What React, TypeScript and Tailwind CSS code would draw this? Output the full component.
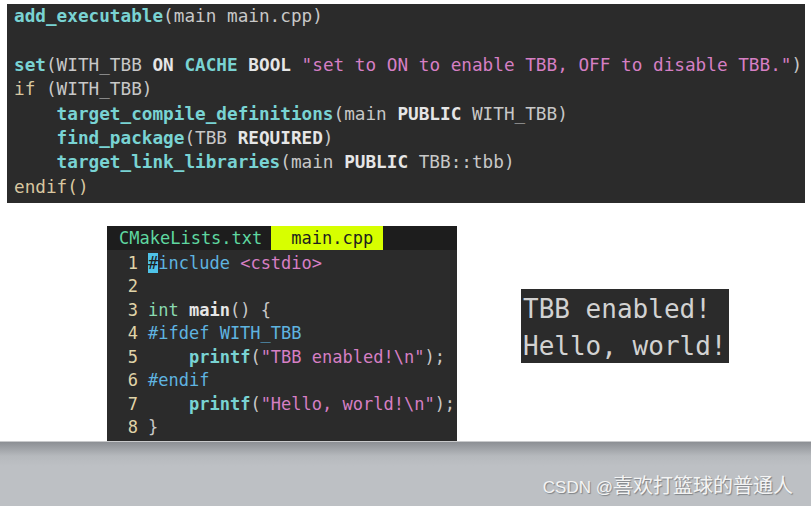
// App.tsx
const mono = "font-['DejaVu_Sans_Mono','Liberation_Mono',monospace]";

const fn = "text-[#79d3d3] font-bold";
const kw = "text-[#e6e6e6] font-bold";
const str = "text-[#d67fc4]";
const tan = "text-[#d9c7a0]";

function CMakeBlock() {
  return (
    <div className={`ml-[7px] mt-[4px] h-[199px] w-[798px] bg-[#2b2b2b] pl-[7px] text-[17.7px] leading-[24.4px] text-[#c8c8c8] whitespace-pre ${mono}`}>
      <div>
        <span className={fn}>add_executable</span>(main main.cpp)
      </div>
      <div> </div>
      <div>
        <span className={fn}>set</span>(WITH_TBB <span className={kw}>ON</span> <span className={fn}>CACHE</span>{" "}
        <span className={kw}>BOOL</span> <span className={str}>"set to ON to enable TBB, OFF to disable TBB."</span>)
      </div>
      <div>
        <span className={tan}>if</span> (WITH_TBB)
      </div>
      <div>
        {"    "}<span className={fn}>target_compile_definitions</span>(main <span className={kw}>PUBLIC</span> WITH_TBB)
      </div>
      <div>
        {"    "}<span className={fn}>find_package</span>(TBB <span className={kw}>REQUIRED</span>)
      </div>
      <div>
        {"    "}<span className={fn}>target_link_libraries</span>(main <span className={kw}>PUBLIC</span> TBB::tbb)
      </div>
      <div>
        <span className={tan}>endif()</span>
      </div>
    </div>
  );
}

const blue = "text-[#5fb4e0]";
const green = "text-[#8ad9b0]";

const lines = [
  <>
    <span className="bg-[#4fc3e8] text-[#1e1e1e]">#</span>
    <span className={blue}>include</span> <span className={str}>&lt;cstdio&gt;</span>
  </>,
  <> </>,
  <>
    <span className={green}>int</span> <span className={kw}>main</span>() {"{"}
  </>,
  <span className={blue}>#ifdef WITH_TBB</span>,
  <>
    {"    "}<span className={fn}>printf</span>(<span className={str}>"TBB enabled!\n"</span>);
  </>,
  <span className={blue}>#endif</span>,
  <>
    {"    "}<span className={fn}>printf</span>(<span className={str}>"Hello, world!\n"</span>);
  </>,
  <>{"}"}</>,
];

function Editor() {
  return (
    <div className={`ml-[107px] h-[215px] w-[350px] bg-[#2b2b2b] text-[17px] text-[#c8c8c8] whitespace-pre ${mono}`}>
      <div className="flex h-[24px] items-center bg-[#1d1d1d] leading-[24px]">
        <span className="pl-[12px] pr-[9px] text-[#5fd7a0]">CMakeLists.txt</span>
        <span className="h-[24px] w-[112px] bg-[#d7ff00] pl-[20px] text-[#1e1e1e]">main.cpp</span>
      </div>
      <div className="pt-[2px] leading-[23.43px]">
        {lines.map((l, i) => (
          <div key={i} className="flex">
            <span className="w-[31px] text-right text-[#e0d4a8]">{i + 1}</span>
            <span className="pl-[10px]">{l}</span>
          </div>
        ))}
      </div>
    </div>
  );
}

function Terminal() {
  return (
    <div className={`ml-[64px] mt-[63px] h-[74px] w-[208px] bg-[#2b2b2b] pl-[2px] pt-[2px] text-[26px] leading-[37px] text-[#d2d2d2] whitespace-pre ${mono}`}>
      <div>TBB enabled!</div>
      <div>Hello, world!</div>
    </div>
  );
}

export default function App() {
  return (
    <div className="h-[506px] w-[811px] overflow-hidden bg-white">
      <CMakeBlock />
      <div className="mt-[23px] flex items-start">
        <Editor />
        <Terminal />
      </div>
      <div className="flex h-[65px] items-end justify-end border-t border-[#c9cacc] bg-[linear-gradient(to_bottom,#8c8f94_0px,#b6b9bd_14px,#bdc0c4_24px,#bdc0c4_100%)] pb-[5px] pr-[18px]">
        <span className="font-['Liberation_Sans','Noto_Sans_CJK_SC',sans-serif] text-[17px] text-[#f4f4f4] [text-shadow:1px_1px_1px_#7d8085]">
          CSDN @<span className="text-[20px]">喜欢打篮球的普通人</span>
        </span>
      </div>
    </div>
  );
}
